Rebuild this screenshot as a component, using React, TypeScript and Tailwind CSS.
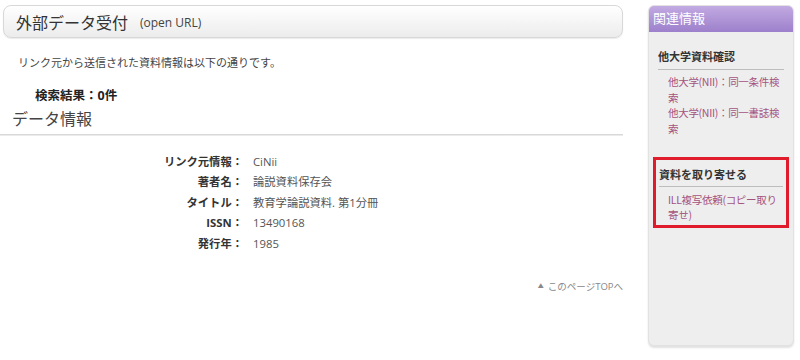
import React from "react";

const font = { fontFamily: '"Open Sans", "Noto Sans CJK JP", "Noto Sans", sans-serif' };
const cjk = { fontFamily: '"Noto Sans CJK JP", "Noto Sans", sans-serif' };

export default function App() {
  const rows: [string, string][] = [
    ["リンク元情報：", "CiNii"],
    ["著者名：", "論説資料保存会"],
    ["タイトル：", "教育学論説資料. 第1分冊"],
    ["ISSN：", "13490168"],
    ["発行年：", "1985"],
  ];
  return (
    <div
      className="w-[800px] h-[360px] bg-white flex overflow-hidden text-[#333]"
      style={font}
    >
      {/* main */}
      <div className="w-[623px] flex flex-col">
        <div className="mt-[5px] ml-[3px] w-[620px] h-[33px] rounded-[8px] border border-[#d8d8d8] bg-gradient-to-b from-white to-[#ececec] shadow-[0_1px_1px_rgba(0,0,0,0.08)] flex items-center pl-[12px] pt-[3px]">
          <span className="text-[16px] text-[#333] leading-none">外部データ受付</span>
          <span className="text-[12px] text-[#444] ml-[12px] leading-none">(open URL)</span>
        </div>
        <p className="mt-[17px] ml-[18px] text-[11px] leading-[16px] text-[#444]">
          リンク元から送信された資料情報は以下の通りです。
        </p>
        <p className="mt-[17px] ml-[35px] text-[12.5px] leading-[16px] font-bold text-[#222]">
          検索結果：0件
        </p>
        <div className="mt-[2px] h-[26px] flex items-center pl-[12px] text-[16px] text-[#444] leading-none">
          データ情報
        </div>
        <div className="mt-[2px] h-[2px] bg-gradient-to-b from-[#d0d0d0] to-[#f4f4f4]" />
        <div className="mt-[16px] flex flex-col">
          {rows.map(([k, v]) => (
            <div key={k} className="flex h-[20.5px] items-center text-[11.3px]">
              <div className="w-[243px] text-right font-bold text-[#333]">{k}</div>
              <div className="ml-[10px] text-[#555]">{v}</div>
            </div>
          ))}
        </div>
        <div className="mt-[25px] flex justify-end items-center text-[9.5px] text-[#888]">
          <span className="text-[6px] mr-[4px]">▲</span>
          <span>このページTOPへ</span>
        </div>
      </div>
      {/* sidebar */}
      <div className="ml-[25px] mt-[5px] w-[146px] h-[341px] rounded-[6px] bg-[#eeeeee] border border-[#e2e2e2] shadow-[0_2px_2px_rgba(0,0,0,0.12)] overflow-hidden flex flex-col">
        <div className="h-[26px] bg-gradient-to-b from-[#c2aae2] to-[#9d80cb] flex items-center pl-[4px] text-[13px] text-white">
          関連情報
        </div>
        <div className="mt-[17px] mx-[9px] text-[11px] font-bold text-[#333] leading-[16px] pb-[4px] border-b border-[#bdbdbd]">
          他大学資料確認
        </div>
        <div
          className="mt-[4px] ml-[19px] mr-[4px] text-[10.5px] tracking-[-0.3px] leading-[15.7px] text-[#a4537e] whitespace-nowrap"
          style={cjk}
        >
          <div>他大学(NII)：同一条件検</div>
          <div>索</div>
          <div>他大学(NII)：同一書誌検</div>
          <div>索</div>
        </div>
        <div className="mt-[20px] mx-[4px] h-[71px] border-[3px] border-[#e01b2b] px-[3px] flex flex-col">
          <div className="mt-[7px] text-[11px] font-bold text-[#333] leading-[16px] pb-[3px] border-b border-[#bdbdbd]">
            資料を取り寄せる
          </div>
          <div
            className="mt-[5px] ml-[9px] text-[10.5px] tracking-[-0.3px] leading-[15.5px] text-[#a4537e] whitespace-nowrap"
            style={cjk}
          >
            <div>ILL複写依頼(コピー取り</div>
            <div>寄せ)</div>
          </div>
        </div>
      </div>
    </div>
  );
}
